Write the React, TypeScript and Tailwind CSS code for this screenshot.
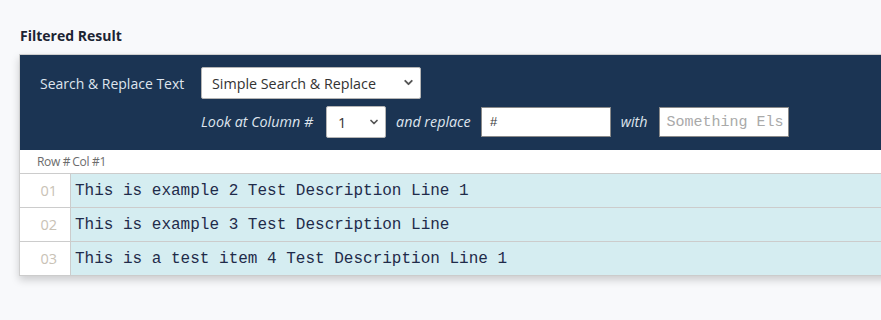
import { ChevronDown } from "lucide-react";

const rows = [
  { n: "01", text: "This is example 2 Test Description Line 1" },
  { n: "02", text: "This is example 3 Test Description Line" },
  { n: "03", text: "This is a test item 4 Test Description Line 1" },
];

const sans = "font-['Open_Sans','Noto_Sans',sans-serif]";
const mono = "font-['Liberation_Mono','Courier_New',monospace]";

export default function App() {
  return (
    <div className={`min-h-[320px] w-[881px] overflow-hidden bg-[#f8f9fb] ${sans}`}>
      <div className="pl-[19px] pt-[26px]">
        <h2 className="pl-[1px] text-[14px] font-bold leading-[20px] text-[#1c2433]">Filtered Result</h2>
        <div className="mt-[8px] w-[900px] border-l border-t border-[#cfcfcf] bg-white shadow-[0_4px_8px_rgba(0,0,0,0.18)]">
          <div className="bg-[#1b3453] pb-[12px] pt-[12px]">
            <div className="flex items-center">
              <span className="ml-[20px] w-[161px] text-[14px] text-[#dfe5ee]">Search &amp; Replace Text</span>
              <div className="relative h-[32px] w-[220px] rounded-[2px] border border-[#b5b5b5] bg-white">
                <span className="absolute left-[10px] top-[5px] text-[14.3px] text-[#333]">Simple Search &amp; Replace</span>
                <ChevronDown className="absolute right-[5px] top-[8px] h-[13px] w-[13px] text-[#555]" strokeWidth={3.5} />
              </div>
            </div>
            <div className="mt-[7px] flex items-center pl-[181px] italic">
              <span className="text-[14.3px] text-[#dfe5ee]">Look at Column #</span>
              <div className="relative ml-[13px] h-[32px] w-[60px] rounded-[2px] border border-[#b5b5b5] bg-white not-italic">
                <span className="absolute left-[11px] top-[5px] text-[14.5px] text-[#333]">1</span>
                <ChevronDown className="absolute right-[5px] top-[9px] h-[12px] w-[12px] text-[#555]" strokeWidth={3.5} />
              </div>
              <span className="ml-[10px] text-[14.3px] text-[#dfe5ee]">and replace</span>
              <div className={`ml-[10px] h-[30px] w-[130px] border border-[#8a8a8a] bg-white pl-[8px] pt-[5px] text-[13px] not-italic text-[#3a3a3a] ${mono}`}>#</div>
              <span className="ml-[10px] text-[14.3px] text-[#dfe5ee]">with</span>
              <div className={`ml-[11px] h-[30px] w-[130px] overflow-hidden whitespace-nowrap border border-[#8a8a8a] bg-white pl-[7px] pt-[4px] text-[15px] not-italic text-[#a9a9a9] ${mono}`}>Something Els</div>
            </div>
          </div>
          <div className="flex h-[23px] items-center pl-[17px] text-[12px] tracking-[-0.3px] text-[#6b6b6b]">
            Row #<span className="ml-[2px]">Col #1</span>
          </div>
          {rows.map((r) => (
            <div key={r.n} className="flex h-[34px] border-t border-[#cccccc]">
              <div className="flex w-[51px] items-center justify-end border-r border-[#cccccc] bg-white pr-[13px] text-[14.5px] text-[#c9c2b6]">
                {r.n}
              </div>
              <div className={`flex flex-1 items-center bg-[#d5edf1] pl-[4px] text-[16px] text-[#1f2b4a] ${mono}`}>{r.text}</div>
            </div>
          ))}
          <div className="h-[1px] bg-[#cccccc]" />
        </div>
      </div>
    </div>
  );
}
